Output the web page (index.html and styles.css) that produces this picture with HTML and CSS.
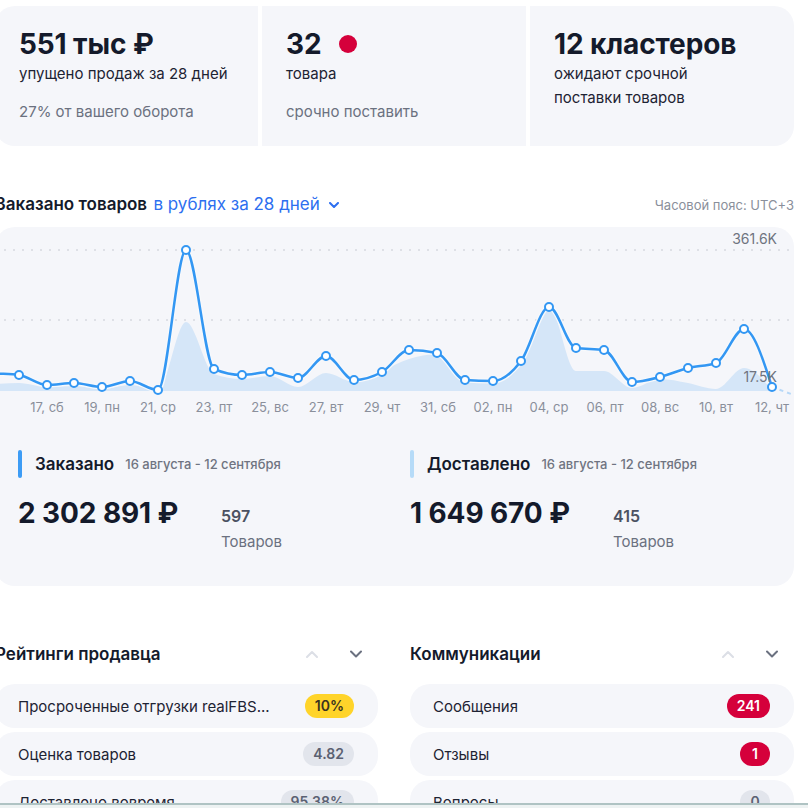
FILE: index.html
```html
<!DOCTYPE html>
<html lang="ru">
<head>
<meta charset="utf-8">
<link rel="stylesheet" href="styles.css">
</head>
<body>
<div class="page">
  <div class="kpis">
    <div class="kpi kpi-first">
      <div class="kpi-title">551 тыс ₽</div>
      <div class="kpi-sub">упущено продаж за 28 дней</div>
      <div class="kpi-note">27% от вашего оборота</div>
    </div>
    <div class="kpi">
      <div class="kpi-title">32 <span class="dot"></span></div>
      <div class="kpi-sub">товара</div>
      <div class="kpi-note">срочно поставить</div>
    </div>
    <div class="kpi kpi-last">
      <div class="kpi-title">12 кластеров</div>
      <div class="kpi-sub">ожидают срочной<br>поставки товаров</div>
    </div>
  </div>

  <div class="chart-head">
    <div class="chart-title">Заказано товаров <span class="chart-link">в рублях за 28 дней <svg class="link-chev" width="10" height="6" viewBox="0 0 10 6"><polyline points="1,1 5,5 9,1" fill="none" stroke="currentColor" stroke-width="2" stroke-linecap="round" stroke-linejoin="round"/></svg></span></div>
    <div class="tz">Часовой пояс: UTC+3</div>
  </div>

  <div class="chart-card">
    <svg class="chart" width="799" height="194" viewBox="-5 226 799 194">
      <line class="grid" x1="-5" y1="249" x2="794" y2="249"/>
      <line class="grid" x1="-5" y1="319" x2="794" y2="319"/>
      <path class="area" d="M -9 390 L -9 383 C 0.3 383, 9.7 382, 19 382 C 28.3 382, 37.7 386, 47 386 C 56.3 386, 64.7 385, 74 385 C 83.3 385, 92.7 388, 102 388 C 111.3 388, 120.7 384, 130 384 C 139.3 384, 148.7 389, 158 389 C 167.3 389, 176.7 321, 186 321 C 195.3 321, 204.7 369.67, 214 373 C 223.3 376.33, 232.7 378, 242 378 C 251.3 378, 260.7 375, 270 375 C 279.3 375, 288.7 386, 298 386 C 307.3 386, 316.7 372, 326 372 C 335.3 372, 344.7 381, 354 381 C 363.3 381, 372.7 373.83, 382 370 C 391.3 366.17, 399.7 360.83, 409 358 C 418.3 355.17, 427.7 353, 437 353 C 446.3 353, 455.7 381, 465 381 C 474.3 381, 483.7 381, 493 381 C 502.3 381, 511.7 374.5, 521 362 C 530.3 349.5, 539.7 306, 549 306 C 558.3 306, 566.7 370, 576 370 C 585.3 370, 594.7 370, 604 370 C 613.3 370, 622.7 387, 632 387 C 641.3 387, 650.7 378, 660 378 C 669.3 378, 678.7 380.33, 688 382 C 697.3 383.67, 706.7 388, 716 388 C 725.3 388, 734.7 367, 744 367 C 753.3 367, 762.7 378, 772 389 L 772 390 Z"/>
      <path class="tail" d="M 772 386 L 794 394"/>
      <path class="halo" d="M -9 372 C 0.3 373, 9.7 372.67, 19 374 C 28.3 375.33, 37.7 384, 47 384 C 56.3 384, 64.7 382, 74 382 C 83.3 382, 92.7 386, 102 386 C 111.3 386, 120.7 380, 130 380 C 139.3 380, 148.7 389, 158 389 C 167.3 389, 176.7 249, 186 249 C 195.3 249, 204.7 364, 214 368 C 223.3 372, 232.7 374, 242 374 C 251.3 374, 260.7 371, 270 371 C 279.3 371, 288.7 377, 298 377 C 307.3 377, 316.7 355, 326 355 C 335.3 355, 344.7 379, 354 379 C 363.3 379, 372.7 376, 382 371 C 391.3 366, 399.7 349, 409 349 C 418.3 349, 427.7 350, 437 352 C 446.3 354, 455.7 378.33, 465 379 C 474.3 379.67, 483.7 380, 493 380 C 502.3 380, 511.7 372.33, 521 360 C 530.3 347.67, 539.7 306, 549 306 C 558.3 306, 566.7 345.67, 576 347 C 585.3 348.33, 594.7 347.67, 604 349 C 613.3 350.33, 622.7 381, 632 381 C 641.3 381, 650.7 378.33, 660 376 C 669.3 373.67, 678.7 369.33, 688 367 C 697.3 364.67, 706.7 365.33, 716 362 C 725.3 358.67, 734.7 328, 744 328 C 753.3 328, 762.7 357, 772 386"/>
      <path class="line" d="M -9 372 C 0.3 373, 9.7 372.67, 19 374 C 28.3 375.33, 37.7 384, 47 384 C 56.3 384, 64.7 382, 74 382 C 83.3 382, 92.7 386, 102 386 C 111.3 386, 120.7 380, 130 380 C 139.3 380, 148.7 389, 158 389 C 167.3 389, 176.7 249, 186 249 C 195.3 249, 204.7 364, 214 368 C 223.3 372, 232.7 374, 242 374 C 251.3 374, 260.7 371, 270 371 C 279.3 371, 288.7 377, 298 377 C 307.3 377, 316.7 355, 326 355 C 335.3 355, 344.7 379, 354 379 C 363.3 379, 372.7 376, 382 371 C 391.3 366, 399.7 349, 409 349 C 418.3 349, 427.7 350, 437 352 C 446.3 354, 455.7 378.33, 465 379 C 474.3 379.67, 483.7 380, 493 380 C 502.3 380, 511.7 372.33, 521 360 C 530.3 347.67, 539.7 306, 549 306 C 558.3 306, 566.7 345.67, 576 347 C 585.3 348.33, 594.7 347.67, 604 349 C 613.3 350.33, 622.7 381, 632 381 C 641.3 381, 650.7 378.33, 660 376 C 669.3 373.67, 678.7 369.33, 688 367 C 697.3 364.67, 706.7 365.33, 716 362 C 725.3 358.67, 734.7 328, 744 328 C 753.3 328, 762.7 357, 772 386"/>
      <g class="pts">
        <circle cx="19" cy="374" r="4"/><circle cx="47" cy="384" r="4"/><circle cx="74" cy="382" r="4"/><circle cx="102" cy="386" r="4"/><circle cx="130" cy="380" r="4"/><circle cx="158" cy="389" r="4"/><circle cx="186" cy="249" r="4"/><circle cx="214" cy="368" r="4"/><circle cx="242" cy="374" r="4"/><circle cx="270" cy="371" r="4"/><circle cx="298" cy="377" r="4"/><circle cx="326" cy="355" r="4"/><circle cx="354" cy="379" r="4"/><circle cx="382" cy="371" r="4"/><circle cx="409" cy="349" r="4"/><circle cx="437" cy="352" r="4"/><circle cx="465" cy="379" r="4"/><circle cx="493" cy="380" r="4"/><circle cx="521" cy="360" r="4"/><circle cx="549" cy="306" r="4"/><circle cx="576" cy="347" r="4"/><circle cx="604" cy="349" r="4"/><circle cx="632" cy="381" r="4"/><circle cx="660" cy="376" r="4"/><circle cx="688" cy="367" r="4"/><circle cx="716" cy="362" r="4"/><circle cx="744" cy="328" r="4"/><circle cx="772" cy="386" r="4"/>
      </g>
      <text class="ylab" x="777" y="243">361.6K</text>
      <text class="ylab" x="777" y="381">17.5K</text>
      <g class="xlab">
        <text x="47" y="411">17, сб</text><text x="102" y="411">19, пн</text><text x="158" y="411">21, ср</text><text x="214" y="411">23, пт</text><text x="270" y="411">25, вс</text><text x="326" y="411">27, вт</text><text x="382" y="411">29, чт</text><text x="438" y="411">31, сб</text><text x="493" y="411">02, пн</text><text x="549" y="411">04, ср</text><text x="605" y="411">06, пт</text><text x="660" y="411">08, вс</text><text x="716" y="411">10, вт</text><text x="772" y="411">12, чт</text>
      </g>
    </svg>
    <div class="summary">
      <div class="sum-col">
        <div class="sum-head"><span class="bar bar-ordered"></span><span class="sum-label">Заказано</span><span class="sum-date">16 августа - 12 сентября</span></div>
        <div class="sum-body">
          <div class="sum-value">2 302 891 ₽</div>
          <div class="sum-count"><div class="cnt">597</div><div class="cnt-label">Товаров</div></div>
        </div>
      </div>
      <div class="sum-col">
        <div class="sum-head"><span class="bar bar-delivered"></span><span class="sum-label">Доставлено</span><span class="sum-date">16 августа - 12 сентября</span></div>
        <div class="sum-body">
          <div class="sum-value">1 649 670 ₽</div>
          <div class="sum-count"><div class="cnt">415</div><div class="cnt-label">Товаров</div></div>
        </div>
      </div>
    </div>
  </div>

  <div class="lists">
    <div class="list">
      <div class="list-head">
        <div class="list-title">Рейтинги продавца</div>
        <div class="arrows">
          <svg class="chev chev-off" width="12" height="8" viewBox="0 0 12 8"><polyline points="1,7 6,2 11,7"/></svg>
          <svg class="chev chev-on" width="12" height="8" viewBox="0 0 12 8"><polyline points="1,1.5 6,6.5 11,1.5"/></svg>
        </div>
      </div>
      <div class="row"><span class="row-text">Просроченные отгрузки realFBS...</span><span class="badge badge-yellow">10%</span></div>
      <div class="row"><span class="row-text">Оценка товаров</span><span class="badge badge-gray">4.82</span></div>
      <div class="row"><span class="row-text">Доставлено вовремя</span><span class="badge badge-gray">95.38%</span></div>
    </div>
    <div class="list">
      <div class="list-head">
        <div class="list-title">Коммуникации</div>
        <div class="arrows">
          <svg class="chev chev-off" width="12" height="8" viewBox="0 0 12 8"><polyline points="1,7 6,2 11,7"/></svg>
          <svg class="chev chev-on" width="12" height="8" viewBox="0 0 12 8"><polyline points="1,1.5 6,6.5 11,1.5"/></svg>
        </div>
      </div>
      <div class="row"><span class="row-text">Сообщения</span><span class="badge badge-red">241</span></div>
      <div class="row"><span class="row-text">Отзывы</span><span class="badge badge-red">1</span></div>
      <div class="row"><span class="row-text">Вопросы</span><span class="badge badge-gray">0</span></div>
    </div>
  </div>
</div>
<div class="bottom-edge"></div>
</body>
</html>
```

FILE: styles.css
```css
html, body {
  margin: 0;
  padding: 0;
  background: #ffffff;
  overflow: hidden;
}
body {
  font-family: Inter, "Noto Sans", sans-serif;
  color: #141a2b;
}
.page {
  margin-left: -5px;
  width: 799px;
  padding-top: 6px;
}

/* KPI cards */
.kpis {
  display: grid;
  grid-template-columns: 263px 264px 264px;
  gap: 4px;
}
.kpi {
  background: #f5f6fa;
  height: 140px;
  box-sizing: border-box;
  padding: 20px 24px 0;
}
.kpi-first { border-radius: 20px 0 0 20px; }
.kpi-last { border-radius: 0 20px 20px 0; }
.kpi-title {
  font-size: 28px;
  font-weight: 700;
  line-height: 36px;
  display: flex;
  align-items: center;
  letter-spacing: -0.1px;
}
.dot {
  display: inline-block;
  width: 18px;
  height: 18px;
  border-radius: 50%;
  background: #d5003b;
  margin-left: 17px;
}
.kpi-sub {
  font-size: 15px;
  line-height: 24px;
  color: #1d2333;
}
.kpi-note {
  margin-top: 14px;
  font-size: 15px;
  line-height: 24px;
  color: #6b7180;
}

/* chart header */
.chart-head {
  margin-top: 46px;
  display: flex;
  justify-content: space-between;
  align-items: baseline;
  line-height: 24px;
}
.chart-title {
  font-size: 17px;
  font-weight: 600;
  color: #141a2b;
}
.chart-link {
  font-weight: 400;
  color: #2d6ff0;
  margin-left: 2px;
}
.link-chev {
  margin-left: 4px;
  vertical-align: 2px;
}
.tz {
  font-size: 13px;
  color: #8a8f9b;
}

/* chart card */
.chart-card {
  margin-top: 10px;
  background: #f5f6fa;
  border-radius: 20px;
  height: 359px;
  overflow: hidden;
}
.chart {
  display: block;
}
.grid {
  stroke: #c7cad2;
  stroke-width: 1;
  stroke-dasharray: 2 7;
}
.area {
  fill: #d5e6f8;
}
.tail {
  fill: none;
  stroke: #b7d8f7;
  stroke-width: 2;
  stroke-dasharray: 4 4;
}
.halo {
  fill: none;
  stroke: #f7f9fc;
  stroke-width: 5;
}
.line {
  fill: none;
  stroke: #3397f3;
  stroke-width: 2.5;
}
.pts circle {
  fill: #ffffff;
  stroke: #3397f3;
  stroke-width: 2;
}
.ylab {
  font-family: Inter, "Noto Sans", sans-serif;
  font-size: 14px;
  fill: #6f7480;
  text-anchor: end;
}
.xlab text {
  font-family: Inter, "Noto Sans", sans-serif;
  font-size: 13px;
  fill: #8a8f9b;
  text-anchor: middle;
}

/* summary */
.summary {
  display: grid;
  grid-template-columns: 392px 384px;
  padding: 29px 0 0 23px;
}
.sum-head {
  display: flex;
  align-items: center;
  height: 28px;
}
.bar {
  width: 4px;
  height: 28px;
  border-radius: 2px;
  margin-right: 13px;
}
.bar-ordered { background: #3d9cf5; }
.bar-delivered { background: #b6dbf8; }
.sum-label {
  font-size: 17px;
  font-weight: 600;
  color: #141a2b;
  margin-right: 11px;
}
.sum-date {
  font-size: 13px;
  font-weight: 500;
  color: #6f7481;
}
.sum-body {
  display: flex;
  margin-top: 17px;
}
.sum-value {
  width: 203px;
  font-size: 28px;
  font-weight: 700;
  line-height: 36px;
  letter-spacing: -0.1px;
}
.sum-count {
  padding-top: 9px;
}
.cnt {
  font-size: 16px;
  font-weight: 600;
  line-height: 24px;
  color: #4b5162;
}
.cnt-label {
  margin-top: 2px;
  font-size: 15px;
  line-height: 24px;
  color: #6b7180;
}

/* lists */
.lists {
  margin-top: 52px;
  display: grid;
  grid-template-columns: 383px 384px;
  gap: 32px;
}
.list-head {
  display: flex;
  justify-content: space-between;
  align-items: center;
  height: 32px;
  margin-bottom: 14px;
}
.list-title {
  font-size: 17px;
  font-weight: 600;
  color: #141a2b;
}
.arrows {
  display: flex;
  gap: 32px;
  padding-right: 16px;
}
.chev polyline {
  fill: none;
  stroke-width: 2;
  stroke-linecap: round;
  stroke-linejoin: round;
}
.chev-off polyline { stroke: #dcdfe6; }
.chev-on polyline { stroke: #6b7180; }
.row {
  display: flex;
  justify-content: space-between;
  align-items: center;
  height: 44px;
  box-sizing: border-box;
  padding: 0 24px 0 23px;
  background: #f5f6fa;
  border-radius: 20px;
  margin-bottom: 4px;
}
.row-text {
  font-size: 15px;
  color: #1d2333;
}
.badge {
  height: 24px;
  min-width: 30px;
  box-sizing: border-box;
  padding: 0 10px;
  border-radius: 12px;
  font-size: 14px;
  font-weight: 600;
  line-height: 24px;
  text-align: center;
}
.badge-yellow { background: #ffd42a; color: #3a3320; }
.badge-gray { background: #e2e5ec; color: #5b6172; }
.badge-red { background: #d5003b; color: #ffffff; }

.bottom-edge {
  position: fixed;
  left: 0;
  right: 0;
  bottom: 0;
  height: 3px;
  border-top: 2px solid #afc3c3;
  background: #edf2f2;
}
```
